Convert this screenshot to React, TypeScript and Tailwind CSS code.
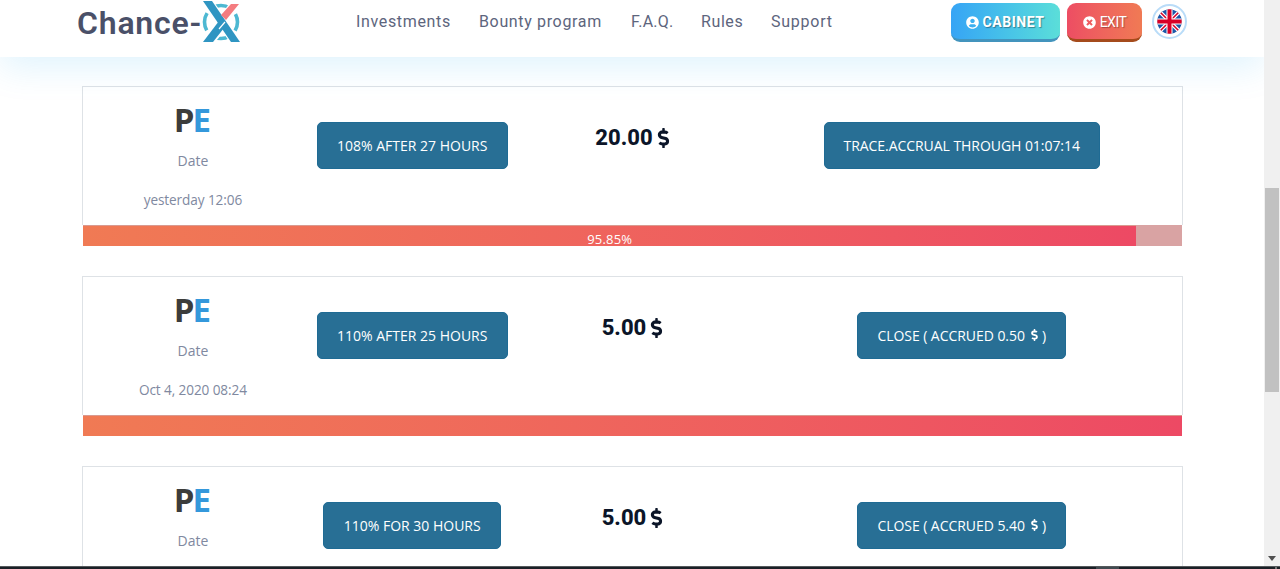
import React from 'react';
import { FaDollarSign, FaTimesCircle, FaUserCircle } from 'react-icons/fa';

const links = [
  { label: 'Investments', width: 'w-[95px]', tracking: 'tracking-[0.65px]' },
  { label: 'Bounty program', width: 'w-[124px]', tracking: 'tracking-[0.65px]' },
  { label: 'F.A.Q.', width: 'w-[42px]', tracking: 'tracking-[0.2px]' },
  { label: 'Rules', width: 'w-[42px]', tracking: 'tracking-[0.6px]' },
  { label: 'Support', width: 'w-[62px]', tracking: 'tracking-[0.75px]' },
];

const deposits = [
  { date: 'yesterday 12:06', plan: '108% AFTER 27 HOURS', planWidth: 'w-[191px]', amount: '20.00', action: 'TRACE.ACCRUAL THROUGH 01:07:14', actionWidth: 'w-[276px]', progress: 95.85 },
  { date: 'Oct 4, 2020 08:24', plan: '110% AFTER 25 HOURS', planWidth: 'w-[191px]', amount: '5.00', accrued: '0.50', actionWidth: 'w-[209px]', progress: 100 },
  { date: '', plan: '110% FOR 30 HOURS', planWidth: 'w-[178px]', amount: '5.00', accrued: '5.40', actionWidth: 'w-[209px]', progress: 100 },
];

function Logo() {
  return (
    <div className="flex w-[164px] shrink-0 items-start">
      <span className="mt-[3px] w-[124px] shrink-0 whitespace-nowrap font-[Roboto,sans-serif] text-[32px] leading-[40px] font-semibold tracking-[0.8px] text-[#4a5068]">
        Chance-
      </span>
      <svg className="h-[43px] w-[40px] shrink-0" viewBox="0 0 40 43">
        <circle cx="20" cy="22" r="16.5" fill="none" stroke="#4db8d2" strokeWidth="3.6" strokeDasharray="18 7.92" strokeDashoffset="9" />
        <path d="M2 1h9l10 14 9-12h7L24 22l15 20h-9l-8-11-9 11H3l15-20z" fill="#fff" stroke="#fff" strokeWidth="2" />
        <path d="M2 1h9L39 42h-9z" fill="#2f95c2" />
        <path d="M30 4h8L25 20l-5-5z" fill="#f47c80" />
        <path d="M2 42L18 21l5 7-11 14z" fill="#2f95c2" />
        <path d="M18 29l6-7" stroke="#fff" strokeWidth="1.2" />
      </svg>
    </div>
  );
}

function Flag() {
  return (
    <div className="flex h-[35px] w-[35px] items-center justify-center rounded-full border-2 border-[#b9dcf8] bg-white">
      <svg className="h-[25px] w-[25px]" viewBox="0 0 25 25">
        <clipPath id="flag"><circle cx="12.5" cy="12.5" r="12.2" /></clipPath>
        <g clipPath="url(#flag)">
          <path d="M0 0h25v25H0z" fill="#1c57a8" />
          <path d="M0 0l25 25M25 0L0 25" stroke="#fff" strokeWidth="3.8" />
          <path d="M0 0l25 25M25 0L0 25" stroke="#d80027" strokeWidth="1.5" />
          <path d="M12.5 0v25M0 12.5h25" stroke="#fff" strokeWidth="6" />
          <path d="M12.5 0v25M0 12.5h25" stroke="#d80027" strokeWidth="4" />
        </g>
      </svg>
    </div>
  );
}

function Header() {
  return (
    <header className="relative z-10 flex h-[57px] shrink-0 items-start bg-white pl-[77px] shadow-[0_10px_36px_rgba(0,160,240,0.13)]">
      <Logo />
      <nav className="ml-[115px] mt-[10px] flex gap-[28px] font-[Roboto,sans-serif] text-[16px] leading-6 text-[#5d657d]">
        {links.map((link) => (
          <a key={link.label} className={`${link.width} ${link.tracking} whitespace-nowrap`}>{link.label}</a>
        ))}
      </nav>
      <div className="ml-[118px] flex items-start">
        <button className="mt-[3px] flex h-[39px] w-[109px] items-center justify-center gap-[3px] rounded-[9px] border-b-[3px] border-[#4394bd] bg-linear-to-r from-[#37a4f5] to-[#5bded9] pt-[2px] font-[Roboto,sans-serif] text-[14px] font-bold tracking-[0.55px] text-white [text-shadow:1px_1px_1px_rgba(0,0,0,0.35)]">
          <FaUserCircle className="h-[13px] w-[13px]" />
          CABINET
        </button>
        <button className="ml-[7px] mt-[3px] flex h-[39px] w-[75px] items-center justify-center gap-[4px] rounded-[9px] border-b-[3px] border-[#a54b1c] bg-linear-to-r from-[#ed4d63] to-[#f07a54] pt-[2px] font-[Roboto,sans-serif] text-[14px] tracking-[-0.5px] text-white [text-shadow:1px_1px_1px_rgba(0,0,0,0.3)]">
          <FaTimesCircle className="h-[13px] w-[13px]" />
          EXIT
        </button>
        <div className="ml-[10px] mt-[4px]"><Flag /></div>
      </div>
    </header>
  );
}

function Deposit({ item }: { item: (typeof deposits)[number] }) {
  return (
    <section className="mb-[30px] h-[160px] shrink-0">
      <div className="grid h-[139px] grid-cols-5 border border-b-0 border-[#dee2e6]">
        <div className="flex flex-col items-center text-[14px] leading-5 text-[#8089a0]">
          <div className="mt-[10px] mr-[3px] flex h-[46px] text-[33px] leading-[46px] font-bold tracking-[-2px]">
            <span className="text-[#3c3c3b]">P</span>
            <span className="text-[#3498db]">E</span>
          </div>
          <p className="mt-[8px]">Date</p>
          <p className="mt-[19px] text-[13.6px] tracking-[-0.1px]">{item.date}</p>
        </div>
        <div className="flex justify-center pt-[35px]">
          <button className={`${item.planWidth} mr-px h-[47px] whitespace-nowrap rounded-[5px] border border-[#1f6b94] bg-[#286f95] pb-px text-[14px] text-white`}>{item.plan}</button>
        </div>
        <div className="flex items-center justify-center gap-[4px] self-start pt-[38px] font-[Roboto,sans-serif] text-[22px] leading-[26px] font-extrabold text-[#0b1528]">
          {item.amount}
          <FaDollarSign className="h-[20px] w-[13px]" />
        </div>
        <div className="col-span-2 flex justify-center pt-[35px]">
          <button className={`${item.actionWidth} mr-px flex h-[47px] items-center justify-center whitespace-nowrap rounded-[5px] border border-[#1f6b94] bg-[#286f95] pb-px text-[14px] tracking-[-0.05px] text-white`}>
            {item.action ?? (
              <>
                CLOSE ( ACCRUED {item.accrued}
                <FaDollarSign className="ml-[5px] mr-[3px] h-[12px] w-[9px]" />)
              </>
            )}
          </button>
        </div>
      </div>
      <div className="mx-px h-[21px] bg-[#d9a3a3]">
        <div className="h-full border-t border-[#d99a90] bg-linear-to-r from-[#f07a54] to-[#ed4964] text-center text-[13px] leading-[26px] tracking-[0.2px] text-white" style={{ width: `${item.progress}%` }}>
          {item.progress < 100 && `${item.progress}%`}
        </div>
      </div>
    </section>
  );
}

export default function App() {
  return (
    <div className="flex h-[569px] w-[1280px] flex-col overflow-hidden bg-white font-['Open_Sans',sans-serif]">
      <div className="flex h-[566px] shrink-0 overflow-hidden">
        <div className="flex w-[1264px] flex-col overflow-hidden">
          <Header />
          <main className="ml-[82px] mt-[29px] flex w-[1101px] flex-col">
            {deposits.map((item) => (
              <Deposit key={item.plan} item={item} />
            ))}
          </main>
        </div>
        {/* scrollbar */}
        <div className="flex w-4 flex-col items-center bg-[#f0f0f0]">
          <div className="mt-[188px] h-[204px] w-[14px] bg-[#c1c1c1]" />
          <svg className="mb-[5px] mt-auto h-[5px] w-[8px]" viewBox="0 0 8 5">
            <path d="M0 0h8L4 5z" fill="#505050" />
          </svg>
        </div>
      </div>
      <div className="flex h-[3px] border-t border-[#55595c] bg-[#1a2026]">
        <div className="ml-[1096px] w-[23px] bg-[#414a50]" />
        <div className="ml-[156px] w-[2px] bg-[#777]" />
      </div>
    </div>
  );
}
